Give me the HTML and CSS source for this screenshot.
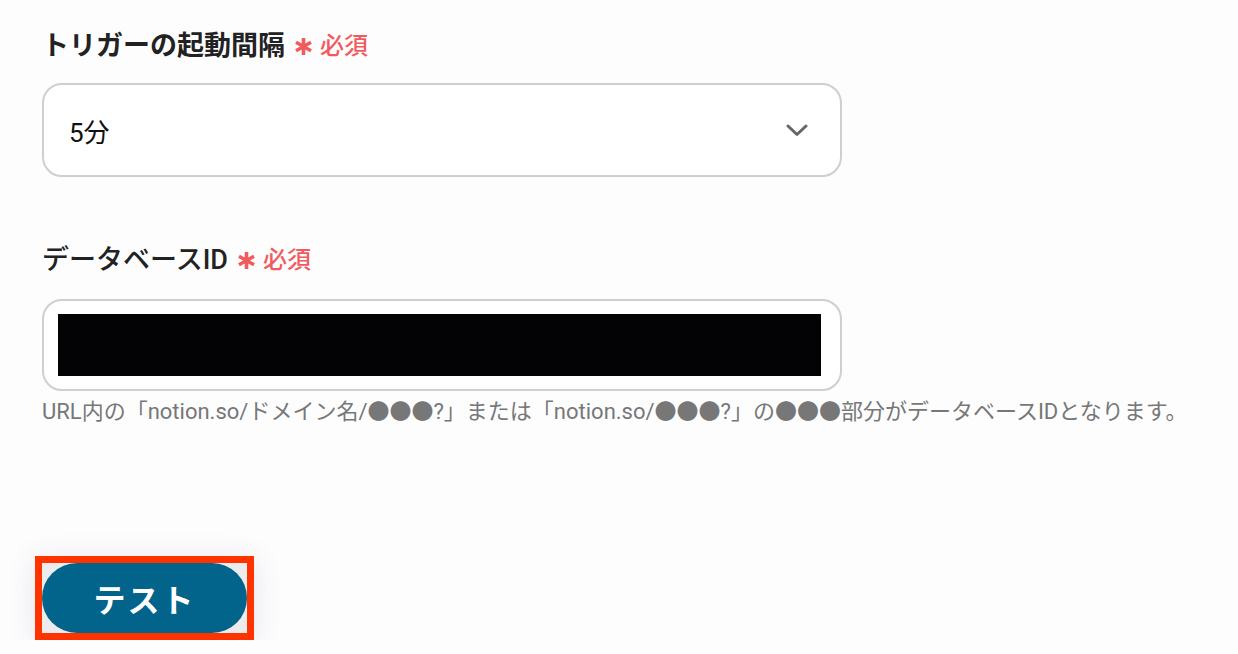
FILE: index.html
```html
<!DOCTYPE html>
<html lang="ja">
<head>
    <meta charset="UTF-8">
    <title>トリガー設定</title>
    <link rel="stylesheet" href="styles.css">
</head>
<body>

<div class="container">
    <div class="field">
        <label class="label bold">トリガーの起動間隔
            <span class="req">
                <svg class="star" width="19" height="19" viewBox="0 0 19 19">
                    <path d="M9.5 1 V18 M2 5.25 L17 13.75 M2 13.75 L17 5.25" stroke="#f25b5e" stroke-width="3.6"/>
                </svg>必須</span>
        </label>
        <div class="select">
            <span class="value">5分</span>
            <svg class="chevron" width="22" height="13" viewBox="0 0 22 13">
                <path d="M2 2 L11 10.5 L20 2" fill="none" stroke="#666" stroke-width="3" stroke-linecap="round" stroke-linejoin="round"/>
            </svg>
        </div>
    </div>

    <div class="field second">
        <label class="label">データベースID
            <span class="req">
                <svg class="star" width="19" height="19" viewBox="0 0 19 19">
                    <path d="M9.5 1 V18 M2 5.25 L17 13.75 M2 13.75 L17 5.25" stroke="#f25b5e" stroke-width="3.6"/>
                </svg>必須</span>
        </label>
        <div class="input">
            <div class="masked"></div>
        </div>
        <p class="help">URL内の「notion.so/ドメイン名/●●●?」または「notion.so/●●●?」の●●●部分がデータベースIDとなります。</p>
    </div>

    <div class="actions">
        <div class="highlight">
            <button type="button" class="test-btn">テスト</button>
        </div>
    </div>
</div>

</body>
</html>
```

FILE: styles.css
```css
body {
    margin: 0;
    background-color: #fdfdfe;
    font-family: Roboto, "Noto Sans CJK JP", sans-serif;
    color: #222;
}
.container {
    padding: 26px 0 0 42px;
    width: 800px;
}
.label {
    display: flex;
    align-items: center;
    font-size: 27px;
    line-height: 40px;
    font-weight: 500;
    color: #222;
}
.label.bold {
    font-weight: bold;
}
.req {
    display: inline-flex;
    align-items: center;
    margin-left: 9px;
    color: #f25b5e;
    font-size: 24px;
    font-weight: 500;
}
.star {
    margin-right: 7px;
}
.select, .input {
    box-sizing: border-box;
    margin-top: 17px;
    height: 94px;
    border: 2px solid #cfcfd2;
    border-radius: 20px;
    background-color: #fff;
    display: flex;
    align-items: center;
}
.select {
    justify-content: space-between;
    padding: 0 32px 0 25px;
}
.value {
    font-size: 26px;
    color: #111;
}
.second {
    margin-top: 63px;
}
.input {
    margin-top: 19px;
    height: 92px;
    padding: 0 19px 0 14px;
}
.masked {
    flex: 1;
    height: 62px;
    background-color: #030204;
}
.help {
    margin: 7px 0 0;
    font-size: 22px;
    line-height: 28px;
    color: #777;
    white-space: nowrap;
}
.actions {
    margin-top: 130px;
    margin-left: -7px;
}
.highlight {
    display: inline-block;
    border: 7px solid #ff3300;
    background-color: #ececef;
    box-shadow: 0 4px 30px rgba(60, 60, 100, 0.12);
}
.test-btn {
    display: block;
    width: 205px;
    height: 70px;
    border: none;
    border-radius: 35px;
    background-color: #02648a;
    color: #fff;
    font-family: inherit;
    font-size: 32px;
    font-weight: bold;
    letter-spacing: 2px;
}
```
